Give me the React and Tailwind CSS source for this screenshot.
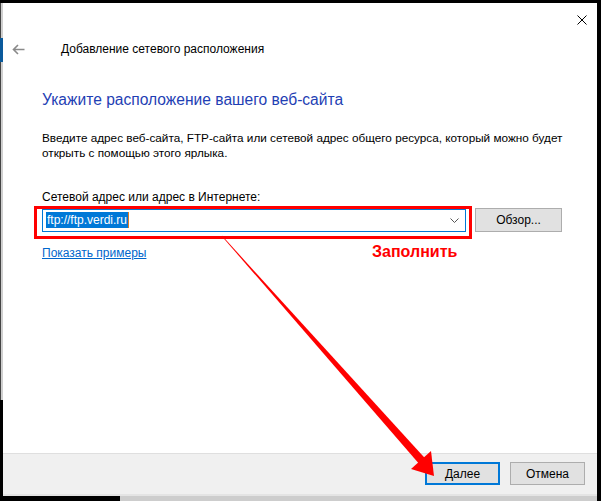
import React from 'react';

const font = { fontFamily: '"Liberation Sans", Arial, sans-serif' };

const CloseIcon = () => (
  <svg width="10" height="10" viewBox="0 0 10 10" className="block">
    <path d="M0.5 0.5 L9.5 9.5 M9.5 0.5 L0.5 9.5" stroke="#000" strokeWidth="1" fill="none" />
  </svg>
);

const BackIcon = () => (
  <svg width="13" height="11" viewBox="0 0 13 11" className="block">
    <path d="M12.5 5.5 H1.5 M6 1 L1.5 5.5 L6 10" stroke="#8a8a8a" strokeWidth="1.6" fill="none" />
  </svg>
);

const Chevron = () => (
  <svg width="9" height="5" viewBox="0 0 9 5" className="block">
    <path d="M0.5 0.5 L4.5 4.5 L8.5 0.5" stroke="#555" strokeWidth="1" fill="none" />
  </svg>
);

const Button = ({ children, primary }) => (
  <button
    className={
      primary
        ? 'w-[75px] h-[23px] bg-[#e1e1e1] border-2 border-[#0078d7] text-[12px] text-black'
        : 'w-[75px] h-[23px] bg-[#e1e1e1] border border-[#adadad] text-[12px] text-black'
    }
  >
    {children}
  </button>
);

export default function App() {
  return (
    <div className="relative w-[601px] h-[501px] bg-black overflow-hidden" style={font}>
      <div className="h-[3px]" />
      <div className="flex h-[491px]">
        {/* window edge behind */}
        <div className="w-[3px] flex flex-col">
          <div className="h-[35px] bg-[#cfcfcf] border-l border-[#444]" />
          <div className="h-[24px] bg-[#0a5a9c]" />
          <div className="h-[338px] bg-[#cfcfcf] border-l border-[#444]" />
          <div className="flex-1 bg-black" />
        </div>

        {/* dialog */}
        <div className="w-[594px] flex flex-col bg-white">
          <div className="h-[30px] flex justify-end items-start pt-[12px] pr-[10px]">
            <CloseIcon />
          </div>
          <div className="h-[32px] flex items-center">
            <div className="ml-[9px]">
              <BackIcon />
            </div>
            <span className="ml-[36px] text-[12px] text-black">Добавление сетевого расположения</span>
          </div>

          <div className="flex-1 pl-[39px] flex flex-col">
            <div className="mt-[24px] text-[15.6px] leading-[22px] text-[#1f3fb4]">
              Укажите расположение вашего веб-сайта
            </div>
            <div className="mt-[19px] text-[11.75px] leading-[15px] text-black w-[540px]">
              Введите адрес веб-сайта, FTP-сайта или сетевой адрес общего ресурса, который можно будет
              <br />
              открыть с помощью этого ярлыка.
            </div>
            <div className="mt-[30px] text-[12px] leading-[15px] text-black">
              Сетевой адрес или адрес в Интернете:
            </div>
            <div className="mt-[3px] flex items-center gap-[9px]">
              <div className="w-[424px] h-[23px] border border-[#0078d7] flex items-center pl-[3px] pr-[6px]">
                <span className="bg-[#0078d7] text-white text-[12px] leading-[16px] px-[1px]">ftp://ftp.verdi.ru</span>
                <span className="w-[1px] h-[16px] bg-[#e07a1f]" />
                <div className="flex-1" />
                <Chevron />
              </div>
              <button className="w-[87px] h-[24px] bg-[#e1e1e1] border border-[#adadad] text-[12px] text-black">
                Обзор...
              </button>
            </div>
            <div className="mt-[14px] text-[12px] leading-[15px]">
              <span className="text-[#0066cc] underline">Показать примеры</span>
            </div>
          </div>

          <div className="h-[41px] bg-[#f0f0f0] border-t border-[#dfdfdf] flex justify-end items-start pt-[8px] pr-[12px] gap-[10px]">
            <Button primary>Далее</Button>
            <Button>Отмена</Button>
          </div>
        </div>

        <div className="flex-1 bg-black" />
      </div>
      <div className="flex h-[2px]">
        <div className="w-[3px] bg-black" />
        <div className="w-[594px] bg-[#e4e4e4]" />
      </div>
      <div className="flex h-[5px]">
        <div className="w-[120px] bg-black" />
        <div className="w-[477px] bg-[#cdcdcd]" />
      </div>

      {/* annotation layer */}
      <div className="absolute left-[34px] top-[206px] w-[438px] h-[33px] border-[3px] border-[#ff0000] pointer-events-none" />
      <div className="absolute left-[372px] top-[242px] text-[16px] leading-[20px] font-bold text-[#ff0000]">
        Заполнить
      </div>
      <svg className="absolute left-0 top-0 pointer-events-none" width="601" height="501" viewBox="0 0 601 501">
        <polygon points="222.2,235.8 425,458.3 419,463.7 221.8,236.2" fill="#ff0000" />
        <polygon points="434,476 411,469 431,451" fill="#ff0000" />
      </svg>
    </div>
  );
}
